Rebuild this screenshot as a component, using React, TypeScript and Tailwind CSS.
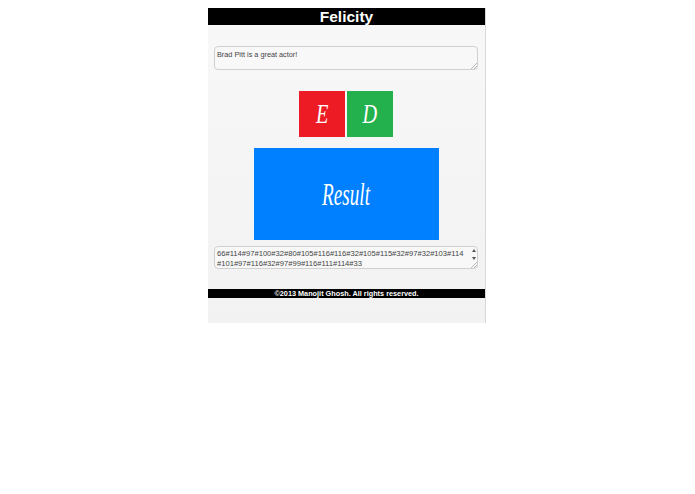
function Grip() {
  return (
    <svg className="absolute right-[1px] bottom-[1px]" width="7" height="7" viewBox="0 0 7 7">
      <path d="M1 7 L7 1 M4 7 L7 4" stroke="#a8a8a8" strokeWidth="0.8" fill="none" />
    </svg>
  );
}

export default function App() {
  return (
    <div className="w-[695px] h-[494px] bg-white pt-2 pl-[208px] font-['Liberation_Sans',Arial,sans-serif]">
      <div className="w-[278px] h-[315px] bg-gradient-to-b from-[#f8f8f8] to-[#f2f2f2] border-r border-[#d8d8d8] flex flex-col items-center">
        <div className="w-full h-[17px] bg-black text-white text-center text-[15.5px] leading-[17px] font-bold shrink-0">Felicity</div>
        <div className="relative mt-[21px] w-[264px] h-[24px] ml-[-1px] shrink-0">
          <textarea
            readOnly
            defaultValue="Brad Pitt is a great actor!"
            className="block w-full h-full rounded-[4px] border border-[#d0d0d0] bg-[#f8f8f8] px-[2px] py-[2px] text-[7.3px] leading-[12px] text-[#444] outline-none resize-none"
          />
          <Grip />
        </div>
        <div className="mt-[21px] flex gap-[2px] ml-[-1px] shrink-0">
          <div className="w-[46px] h-[46px] bg-[#ed1c24] text-white flex items-center justify-center font-['Liberation_Serif',serif]">
            <span className="inline-block text-[27px] leading-none italic scale-x-75">E</span>
          </div>
          <div className="w-[46px] h-[46px] bg-[#22b14c] text-white flex items-center justify-center font-['Liberation_Serif',serif]">
            <span className="inline-block text-[27px] leading-none italic scale-x-75">D</span>
          </div>
        </div>
        <div className="mt-[11px] w-[185px] h-[92px] ml-[-1px] bg-[#0080ff] text-white flex items-center justify-center font-['Liberation_Serif',serif] shrink-0">
          <span className="inline-block text-[32px] leading-none italic scale-x-[0.6]">Result</span>
        </div>
        <div className="relative mt-[6px] w-[264px] h-[23px] ml-[-1px] shrink-0">
          <textarea
            readOnly
            defaultValue={"66#114#97#100#32#80#105#116#116#32#105#115#32#97#32#103#114\n#101#97#116#32#97#99#116#111#114#33"}
            className="block w-full h-full rounded-[4px] border border-[#d0d0d0] bg-[#f8f8f8] pl-[2px] pr-[8px] py-[2px] text-[7.6px] leading-[10px] text-[#444] outline-none resize-none overflow-hidden whitespace-pre"
          />
          <svg className="absolute right-[1px] top-[2px]" width="6" height="13" viewBox="0 0 6 13">
            <path d="M3 1 L5 4 H1 Z M3 12 L5 9 H1 Z" fill="#555" />
          </svg>
          <Grip />
        </div>
        <div className="mt-[20px] w-full h-[9px] bg-black text-white text-center text-[7.3px] leading-[9px] font-bold shrink-0">©2013 Manojit Ghosh. All rights reserved.</div>
      </div>
    </div>
  );
}
